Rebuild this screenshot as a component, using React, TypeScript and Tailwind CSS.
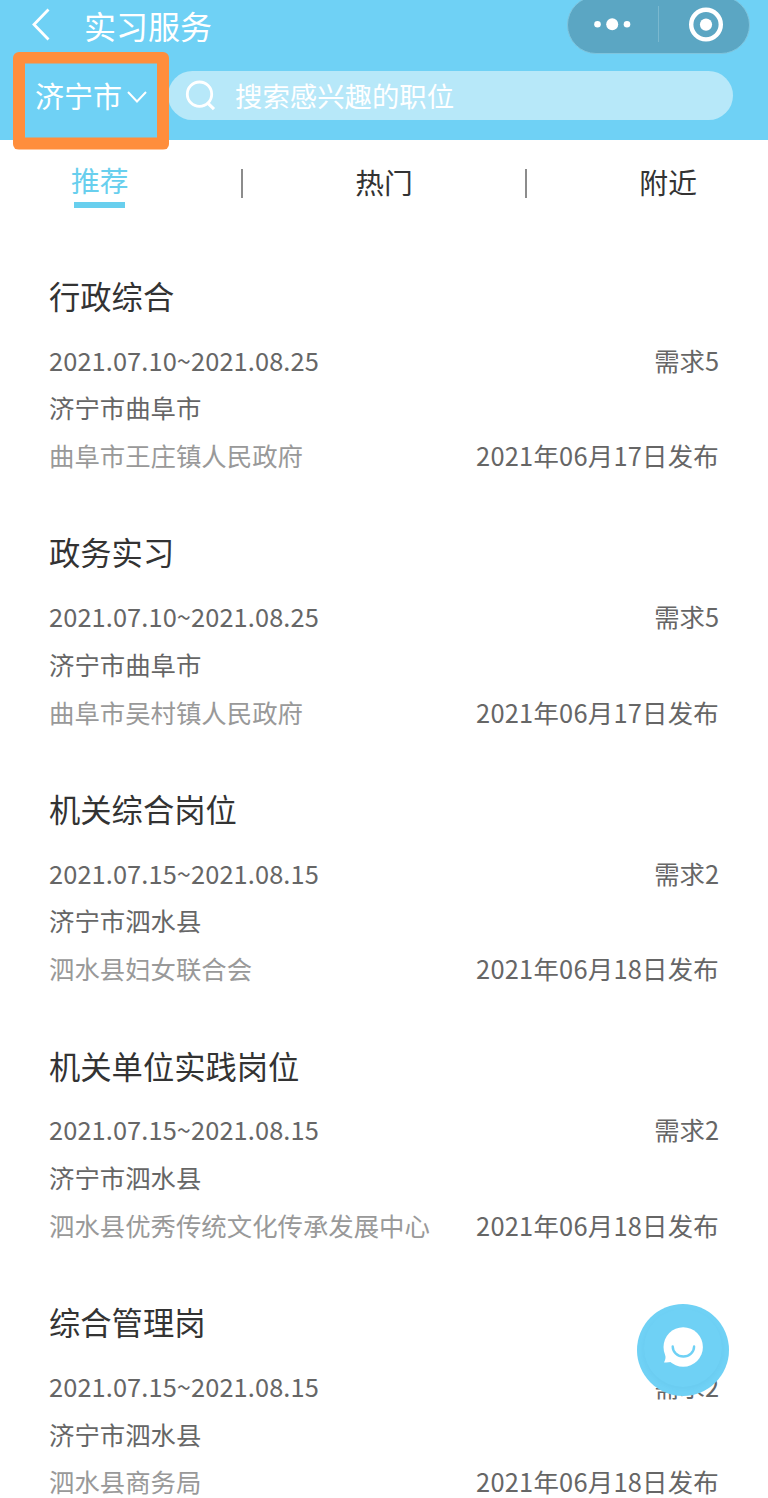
import {useState} from "react";

type Job = {
    title: string;
    period: string;
    area: string;
    company: string;
    demand: number;
    published: string;
};

const jobs: Job[] = [
    {title: "行政综合", period: "2021.07.10~2021.08.25", area: "济宁市曲阜市", company: "曲阜市王庄镇人民政府", demand: 5, published: "2021年06月17日发布"},
    {title: "政务实习", period: "2021.07.10~2021.08.25", area: "济宁市曲阜市", company: "曲阜市吴村镇人民政府", demand: 5, published: "2021年06月17日发布"},
    {title: "机关综合岗位", period: "2021.07.15~2021.08.15", area: "济宁市泗水县", company: "泗水县妇女联合会", demand: 2, published: "2021年06月18日发布"},
    {title: "机关单位实践岗位", period: "2021.07.15~2021.08.15", area: "济宁市泗水县", company: "泗水县优秀传统文化传承发展中心", demand: 2, published: "2021年06月18日发布"},
    {title: "综合管理岗", period: "2021.07.15~2021.08.15", area: "济宁市泗水县", company: "泗水县商务局", demand: 2, published: "2021年06月18日发布"},
];

function Capsule() {
    return (
        <div className="absolute -top-1 left-[567px] h-[58px] w-[183px] rounded-full border border-[#7fc4dd] bg-[#5ba6c3]">
            <svg className="h-full w-full" viewBox="568 -3 181 56" fill="#fff">
                <circle cx="597.5" cy="24.2" r="3.3" />
                <circle cx="612.2" cy="24.2" r="6" />
                <circle cx="627" cy="24.2" r="3.3" />
                <path d="M658.5 6v36" stroke="#7ab8cf" strokeWidth="1" />
                <circle cx="706" cy="24.6" r="14.8" fill="none" stroke="#fff" strokeWidth="4.4" />
                <circle cx="706" cy="24.6" r="6.1" />
            </svg>
        </div>
    );
}

function Header() {
    return (
        <header className="relative h-[139.5px] bg-[#6fd1f5] text-white">
            <div className="flex h-[50px] items-center pl-[31px]">
                <svg className="h-[50px] w-5" viewBox="0 0 20 50" fill="none" stroke="#fff" strokeWidth="2.8">
                    <path d="M17.5 9.5 3 24.5l14.5 15" />
                </svg>
                <h1 className="ml-[33px] text-[32px] leading-[48px]">实习服务</h1>
            </div>
            <Capsule />
            <div className="mt-[20.5px] flex h-[49.5px] items-center pl-[35px]">
                <button className="flex w-[133px] items-center text-[29px] leading-[49px]">
                    济宁市
                    <svg className="ml-[5px] mt-[3px] h-3 w-5" viewBox="0 0 20 12" fill="none" stroke="#fff" strokeWidth="2">
                        <path d="M1 1l9 9.5L19 1" />
                    </svg>
                </button>
                <div className="flex h-full w-[565px] items-center rounded-full bg-[#b7e8f9]">
                    <svg className="ml-[17px] h-8 w-8" viewBox="0 0 32 32" fill="none" stroke="#fff" strokeWidth="2.8">
                        <circle cx="14.5" cy="15.2" r="12.2" />
                        <path d="M22.8 24.2l6.2 6" strokeWidth="3.2" />
                    </svg>
                    <span className="ml-[18px] pt-px text-[27.4px] leading-[49px]">搜索感兴趣的职位</span>
                </div>
            </div>
            {/* highlight around the city picker */}
            <div className="absolute left-[13px] top-[51.5px] h-[98px] w-[156px] rounded-[6px] bg-[#ff8e3c] [clip-path:polygon(evenodd,0_0,100%_0,100%_100%,0_100%,0_0,12px_12px,144px_12px,144px_86px,12px_86px,12px_12px)]" />
        </header>
    );
}

function Tabs() {
    const [active, setActive] = useState("推荐");
    const tabs = ["推荐", "热门", "附近"];

    return (
        <nav className="flex h-[88px] items-center justify-between px-[71px] text-[28.8px] leading-[40px] text-[#333]">
            {tabs.map((tab, i) => (
                <div key={tab} className="contents">
                    {i > 0 && <span className="h-[29px] w-0.5 bg-[#8c8c8c]" />}
                    <button
                        className={tab === active ? "flex flex-col items-center text-[#68cfee]" : "pb-[3px]"}
                        onClick={() => setActive(tab)}
                    >
                        {tab}
                        {tab === active && <span className="mt-[2px] h-1.5 w-[51px] bg-[#68cfee]" />}
                    </button>
                </div>
            ))}
        </nav>
    );
}

function JobItem({ job }: { job: Job }) {
    return (
        <li className="h-[256.6px] pl-[49px] pr-[49px] text-[25.4px] leading-[47.7px] text-[#666]">
            <h2 className="text-[31.3px] leading-[80.7px] text-[#333]">{job.title}</h2>
            <div className="flex justify-between">
                <span className="tracking-[0.1px]">{job.period}</span>
                <span>需求{job.demand}</span>
            </div>
            <div>{job.area}</div>
            <div className="flex justify-between">
                <span className="text-[#999]">{job.company}</span>
                <span className="tracking-[0.25px]">{job.published}</span>
            </div>
        </li>
    );
}

export default function App() {
    return (
        <div className="relative h-[1498px] w-[768px] overflow-hidden bg-white font-['Noto_Sans_CJK_SC',sans-serif]">
            <Header />
            <Tabs />
            <ul className="pt-[28.3px]">
                {jobs.map((job) => (
                    <JobItem key={job.title} job={job} />
                ))}
            </ul>
            <button className="absolute left-[637px] top-[1304px] h-[92px] w-[92px] rounded-full bg-[#6fd1f5]">
                <span className="absolute left-[7px] top-[5px] h-[78px] w-[78px] rounded-full shadow-[0_2px_4px_rgba(40,130,170,0.07)]" />
                <svg className="relative h-full w-full" viewBox="0 0 92 92" fill="none">
                    <circle cx="46.2" cy="43" r="19.7" fill="#fff" />
                    <path d="M28 49q1.5 5-1 9.500 7 .5 11-2z" fill="#fff" />
                    <path d="M35.700 42.500a10.700 10 0 0 0 21.400 0" stroke="#6fd1f5" strokeWidth="2.400" strokeLinecap="round" />
                </svg>
            </button>
        </div>
    );
}
